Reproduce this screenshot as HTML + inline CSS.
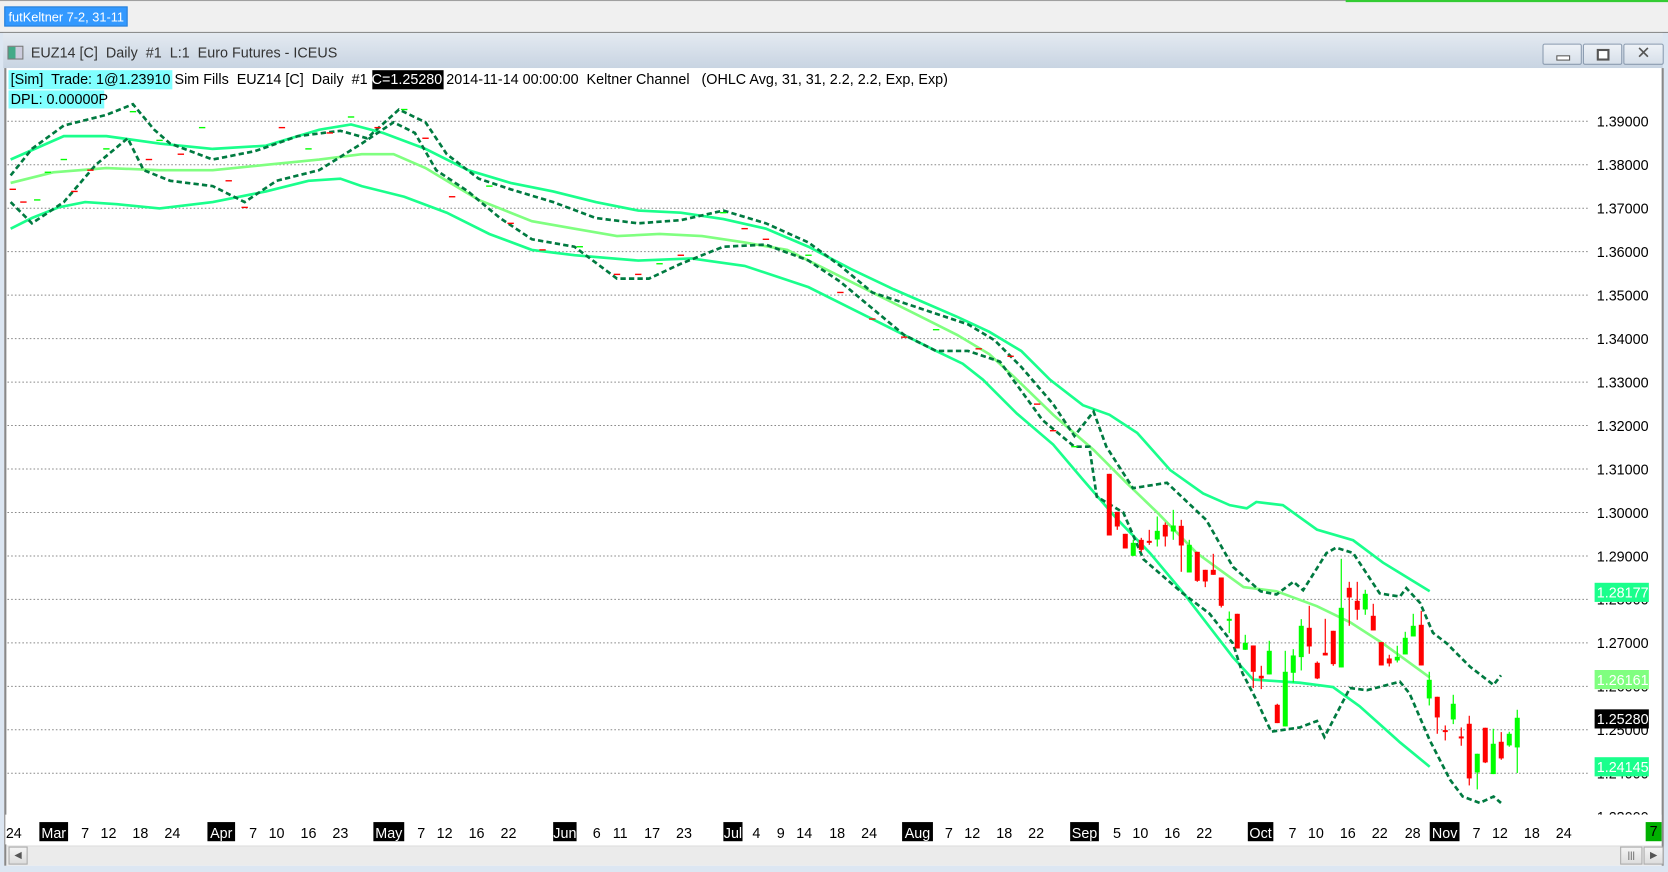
<!DOCTYPE html>
<html><head><meta charset="utf-8">
<style>
html,body{margin:0;padding:0;width:1668px;height:871px;overflow:hidden;background:#f0f0f0;font-family:"Liberation Sans",Arial,sans-serif;}
#w{position:absolute;left:0;top:0;width:1568px;height:819px;transform:scale(1.06378,1.06349);transform-origin:0 0;}
.a{position:absolute;white-space:pre;}
</style></head><body>
<div id="w">
<div class="a" style="left:0;top:0;width:1568px;height:30px;background:#f0f0f0;border-top:1px solid #a0a0a0"></div>
<div class="a" style="left:1265px;top:0;width:303px;height:2px;background:#3c3"></div>
<div class="a" style="left:4px;top:6px;width:116px;height:19px;background:#3399ff;border:1px solid #2a7fd6;color:#fff;font-size:12px;line-height:19px;padding-left:3px;box-sizing:border-box">futKeltner 7-2, 31-11</div>
<div class="a" style="left:0;top:30px;width:1568px;height:789px;background:#dce6f2;border-top:1px solid #888"></div>
<div class="a" style="left:3px;top:31px;width:1560px;height:33px;background:linear-gradient(#e4eaf1,#c8d4e2)"></div>
<div class="a" style="left:7px;top:43px;width:13px;height:11px;border:1px solid #777;background:linear-gradient(90deg,#4a8 0,#4a8 50%,#ccd 50%)"></div>
<div class="a" style="left:29px;top:42px;font-size:13.5px;color:#333">EUZ14 [C]  Daily  #1  L:1  Euro Futures - ICEUS</div>
<div class="a" style="left:1450px;top:41px;width:35px;height:18px;border:1px solid #8c9cb0;border-radius:2px;background:linear-gradient(#eef2f7,#d6dfe9)"><div class="a" style="left:12px;top:10px;width:11px;height:3px;border:1px solid #555;background:#fff"></div></div>
<div class="a" style="left:1488px;top:41px;width:35px;height:18px;border:1px solid #8c9cb0;border-radius:2px;background:linear-gradient(#eef2f7,#d6dfe9)"><div class="a" style="left:12px;top:4px;width:8px;height:7px;border:2px solid #555;background:#fff"></div></div>
<div class="a" style="left:1526px;top:41px;width:36px;height:18px;border:1px solid #8c9cb0;border-radius:2px;background:linear-gradient(#eef2f7,#d6dfe9);font-size:16px;color:#555;text-align:center;line-height:18px">✕</div>
<div class="a" style="left:4px;top:64px;width:1560px;height:750px;background:#fff;border-left:2px solid #888;border-right:2px solid #888;box-sizing:border-box"></div>
<div class="a" style="left:8px;top:66px;width:154px;height:18px;background:#80ffff"></div>
<div class="a" style="left:8px;top:85px;width:90px;height:17px;background:#80ffff"></div>
<div class="a" style="left:350px;top:66px;width:67px;height:18px;background:#000"></div>
<div class="a" style="left:10px;top:67px;font-size:13.5px;color:#000">[Sim]  Trade: 1@1.23910 Sim Fills  EUZ14 [C]  Daily  #1 <span style="color:#fff">C=1.25280</span> 2014-11-14 00:00:00  Keltner Channel   (OHLC Avg, 31, 31, 2.2, 2.2, Exp, Exp)</div>
<div class="a" style="left:10px;top:86px;font-size:13.5px;color:#000">DPL: 0.00000P</div>
<svg class="a" id="s" style="left:0;top:0" width="1568" height="819" viewBox="0 0 1568 819"></svg>
<div class="a" style="left:6px;top:795px;width:1556px;height:18px;background:#ebebeb;border-top:1px solid #ddd"></div>
<div class="a" style="left:8px;top:796px;width:16px;height:15px;border:1px solid #aaa;background:linear-gradient(#f4f4f4,#ddd);font-size:9px;color:#555;line-height:15px;text-align:center">◀</div>
<div class="a" style="left:1523px;top:796px;width:19px;height:15px;border:1px solid #aaa;background:linear-gradient(#f4f4f4,#ddd);font-size:9px;color:#555;line-height:15px;text-align:center">|||</div>
<div class="a" style="left:1545px;top:796px;width:17px;height:15px;border:1px solid #aaa;background:linear-gradient(#f4f4f4,#ddd);font-size:9px;color:#555;line-height:15px;text-align:center">▶</div>
<div class="a" style="left:1547px;top:773px;width:15px;height:18px;background:#00b000;color:#000;font-size:13.5px;text-align:center;line-height:18px">7</div>
</div>
<script>
var s=document.getElementById('s'),h='';
function Y(p){return 114+(1.39-p)*4087.5;}
for(var i=0;i<17;i++){var p=1.39-i*0.01,y=Y(p).toFixed(1);
h+='<line x1="7" y1="'+y+'" x2="1493" y2="'+y+'" stroke="#888" stroke-width="1" stroke-dasharray="1.5 2"/>';
h+='<text x="1501" y="'+(+y+5)+'" font-size="13.5" font-family="Liberation Sans" fill="#000">'+p.toFixed(5)+'</text>';}
function pl(a,c,w,d){return '<polyline fill="none" stroke="'+c+'" stroke-width="'+w+'" '+(d?'stroke-dasharray="'+d+'" ':'')+'points="'+a.join(' ')+'"/>';}
var up=[10,150,60,128,100,128,150,135,200,140,250,137,300,122,330,117,360,125,400,140,440,160,480,172,520,180,560,190,600,198,640,200,680,206,720,215,760,232,800,253,840,272,870,285,900,298,930,312,960,330,987,357,1018,381,1043,390,1069,407,1100,442,1131,464,1156,475,1172,478,1181,472,1206,475,1238,498,1272,508,1300,529,1344,556];
var md=[10,172,50,162,100,158,150,160,200,160,250,155,300,150,340,145,370,145,400,158,450,188,500,208,540,215,580,222,620,220,660,222,700,228,740,235,780,255,820,275,860,295,900,315,930,333,956,357,990,390,1028,423,1060,455,1088,482,1125,520,1169,552,1200,556,1238,570,1269,585,1300,605,1344,637];
var lo=[10,215,30,205,55,195,80,190,110,192,150,196,200,190,250,180,290,170,320,168,340,175,380,185,420,200,460,220,500,235,540,240,600,245,650,243,700,250,760,270,800,290,840,310,880,330,905,342,924,357,956,389,990,418,1018,451,1050,488,1081,520,1112,557,1159,618,1178,639,1222,642,1253,646,1278,664,1316,698,1344,721];
var du=[10,165,30,140,60,118,100,108,125,98,145,122,160,135,200,150,240,142,280,128,320,123,345,130,375,103,400,115,420,145,450,168,480,178,520,190,560,205,600,210,640,207,680,198,720,210,760,228,790,250,820,275,850,285,880,295,910,305,935,320,960,345,990,380,1010,410,1028,387,1040,420,1065,459,1097,454,1134,489,1159,533,1185,556,1200,559,1216,547,1225,555,1247,520,1256,515,1272,520,1297,558,1316,561,1322,553,1335,567,1347,595,1360,605,1382,627,1404,644,1411,635];
var dl=[10,190,30,210,60,190,90,155,120,130,135,160,160,170,200,175,230,190,260,170,300,160,340,135,370,115,390,125,410,160,440,180,470,205,500,225,540,232,580,262,610,262,640,248,680,232,720,230,760,245,790,265,820,290,850,315,880,330,910,330,940,340,980,395,1010,420,1024,420,1031,467,1056,482,1075,526,1112,558,1137,577,1159,605,1168,633,1181,658,1195,688,1222,684,1238,678,1245,693,1269,647,1285,649,1316,641,1325,652,1344,696,1363,733,1375,749,1391,755,1404,749,1411,755];
h+=pl(up,'#1aff8c',2.5)+pl(lo,'#1aff8c',2.5)+pl(md,'#80ff80',2.5)+pl(du,'#007a40',2.5,'5 3')+pl(dl,'#007a40',2.5,'5 3');
var c7=[[478,282,467,282,467,'r'],[502,396,440,396,450,'r'],[526,462,506,462,506,'r'],[550,489,528,480,528,'g'],[574,480,510,474,516,'r'],[598,483,486,450,495,'r'],[622,453,479,410,500,'g'],[646,435,470,428,500,'r'],[670,437,455,390,480,'g'],[694,438,497,420,576,'r'],[718,495,578,480,578,'g'],[742,516,603,516,606,'r'],[766,570,605,570,622,'r'],[790,570,585,522,585,'r'],[814,593,678,593,683,'r'],[838,717,721,695,760,'g'],[862,702,806,702,806,'r'],[886,789,810,765,810,'g'],[910,797,876,797,925,'r'],[934,888,896,858,928,'r'],[958,813,884,783,884,'g'],[982,975,1030,972,1030,'r'],[1006,876,1040,813,1040,'g'],[1030,827,879,808,908,'g'],[1054,738,832,718,872,'g'],[1078,744,800,678,822,'r'],[1102,849,896,845,898,'r'],[1126,819,827,717,827,'r']];
var c3=[[100,273,373,273,378,'r'],[124,204,383,57,383,'g'],[148,144,173,126,258,'r'],[172,183,210,126,240,'r'],[196,162,209,150,225,'g'],[220,228,272,192,272,'r'],[244,307,377,307,377,'r'],[268,356,371,345,380,'r'],[292,351,362,318,368,'g'],[316,294,344,276,344,'g'],[340,258,290,222,290,'g'],[364,255,377,213,377,'r'],[388,420,476,396,497,'g'],[412,471,533,471,582,'r'],[436,571,577,557,602,'r'],[460,492,539,465,553,'g'],[484,590,594,563,618,'r'],[508,552,716,528,737,'r'],[532,642,698,642,749,'g'],[556,564,668,564,670,'r'],[580,612,703,567,703,'g'],[604,606,656,577,660,'r'],[628,582,617,576,621,'g'],[652,534,623,510,700,'g']];
var g='<g transform="scale(0.94)">';
function cd(x,yt,yb,wt,wb,col){var c=col=='r'?'#f00':'#0f0';
g+='<line x1="'+x+'" y1="'+wt+'" x2="'+x+'" y2="'+wb+'" stroke="'+c+'" stroke-width="1.2"/>';
g+='<rect x="'+(x-2.5)+'" y="'+yt+'" width="5" height="'+Math.max(2,yb-yt)+'" fill="'+c+'"/>';}
c7.forEach(function(c){cd(950+c[0]/3,380+c[1]/3,380+c[2]/3,380+c[3]/3,380+c[4]/3,c[5]);});
c3.forEach(function(c){cd(1300+c[0]/3,540+c[1]/3,540+c[2]/3,540+c[3]/3,540+c[4]/3,c[5]);});
g+='</g>';h+=g;
var sm=[[12,178,'r'],[22,190,'r'],[35,188,'g'],[45,162,'g'],[60,150,'g'],[70,180,'r'],[85,160,'r'],[100,140,'g'],[125,105,'g'],[140,150,'r'],[150,132,'g'],[170,145,'r'],[190,120,'g'],[215,170,'r'],[230,195,'r'],[265,120,'r'],[290,140,'g'],[310,125,'r'],[330,110,'g'],[355,120,'r'],[380,103,'g'],[400,130,'r'],[425,185,'r'],[460,175,'g'],[480,210,'r'],[510,235,'r'],[545,232,'g'],[580,258,'r'],[600,258,'r'],[620,248,'g'],[640,240,'r'],[680,200,'g'],[700,215,'r'],[720,225,'r'],[760,240,'g'],[790,275,'r'],[820,300,'r'],[850,317,'r'],[880,310,'g'],[920,328,'r'],[950,335,'r'],[975,380,'r'],[990,405,'r'],[1010,420,'g']];
sm.forEach(function(m){h+='<line x1="'+(m[0]-3)+'" y1="'+m[1]+'" x2="'+(m[0]+3)+'" y2="'+m[1]+'" stroke="'+(m[2]=='r'?'#f00':'#0f0')+'" stroke-width="1.3"/>';});
var tg=[[548,'#1aff8c','1.28177'],[630,'#80ff80','1.26161'],[667,'#000','1.25280'],[712,'#1aff8c','1.24145']];
tg.forEach(function(t){h+='<rect x="1499" y="'+t[0]+'" width="51" height="18" fill="'+t[1]+'"/><text x="1501" y="'+(t[0]+14)+'" font-size="13.5" font-family="Liberation Sans" fill="#fff">'+t[2]+'</text>';});
h+='<rect x="5" y="766" width="1557" height="28" fill="#fff"/>';
var dl2=[[13,'24'],[37,'Mar',27],[80,'7'],[102,'12'],[132,'18'],[162,'24'],[195,'Apr',26],[238,'7'],[260,'10'],[290,'16'],[320,'23'],[351,'May',29],[396,'7'],[418,'12'],[448,'16'],[478,'22'],[520,'Jun',22],[561,'6'],[583,'11'],[613,'17'],[643,'23'],[680,'Jul',18],[711,'4'],[734,'9'],[756,'14'],[787,'18'],[817,'24'],[848,'Aug',29],[892,'7'],[914,'12'],[944,'18'],[974,'22'],[1006,'Sep',27],[1050,'5'],[1072,'10'],[1102,'16'],[1132,'22'],[1173,'Oct',24],[1215,'7'],[1237,'10'],[1267,'16'],[1297,'22'],[1328,'28'],[1344,'Nov',28],[1388,'7'],[1410,'12'],[1440,'18'],[1470,'24']];
dl2.forEach(function(d){var box=d[2];if(box){h+='<rect x="'+d[0]+'" y="773" width="'+box+'" height="18" fill="#000"/>';h+='<text x="'+(d[0]+box/2)+'" y="788" text-anchor="middle" font-size="13.5" font-family="Liberation Sans" fill="#fff">'+d[1]+'</text>';}
else h+='<text x="'+d[0]+'" y="788" text-anchor="middle" font-size="13.5" font-family="Liberation Sans" fill="#000">'+d[1]+'</text>';});
s.innerHTML=h;
</script>
</body></html>
